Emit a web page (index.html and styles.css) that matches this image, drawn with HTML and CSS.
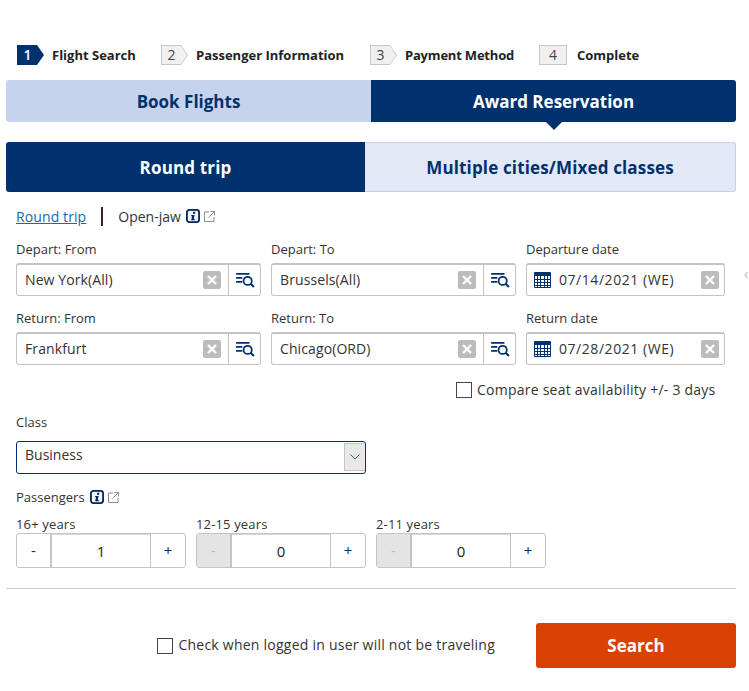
FILE: index.html
```html
<!DOCTYPE html>
<html lang="en">
<head>
    <meta charset="UTF-8">
    <meta name="viewport" content="width=device-width, initial-scale=1.0">
    <title>Award Reservation</title>
    <link rel="stylesheet" href="styles.css">
</head>
<body>
    <svg class="icon-defs" width="0" height="0">
        <symbol id="icon-list" viewBox="0 0 22 18">
            <path d="M1 2h15M1 6.5h7M1 11h7" fill="none" stroke="#00316f" stroke-width="2"/>
            <circle cx="14" cy="10" r="4.6" fill="none" stroke="#00316f" stroke-width="2"/>
            <path d="M17.3 13.3l3.7 3.7" fill="none" stroke="#00316f" stroke-width="2.4"/>
        </symbol>
        <symbol id="icon-clear" viewBox="0 0 18 18">
            <rect width="18" height="18" rx="2" fill="#bcbcbc"/>
            <path d="M5 5l8 8M13 5l-8 8" stroke="#fff" stroke-width="2.4"/>
        </symbol>
        <symbol id="icon-cal" viewBox="0 0 17 16">
            <path d="M.5.5h16v15H.5z" fill="none" stroke="#00316f"/>
            <path d="M0 1h17v3H0z" fill="#00316f"/>
            <path d="M0 7.5h17M0 10.5h17M0 13.5h17M3.5 1v14M6.5 1v14M10.5 1v14M13.5 1v14" stroke="#00316f"/>
        </symbol>
        <symbol id="icon-info" viewBox="0 0 14 14">
            <rect x=".9" y=".9" width="12.2" height="12.2" rx="2.5" fill="#f2f4f9" stroke="#00255a" stroke-width="1.8"/>
            <path d="M7 2.8h2.2v1.9H7zM5.2 6h3.4l-.9 4h1.1v1.3H5.2l.9-4H5.2z" fill="#00255a"/>
        </symbol>
        <symbol id="icon-ext" viewBox="0 0 11 11">
            <path d="M5 1H.5v9.5H10V6M6.5.5h4v4M10.5.5L4.5 6.5" fill="none" stroke="#8c8c8c"/>
        </symbol>
    </svg>

    <div class="page">
        <ol class="steps">
            <li class="step step-first">
                <span class="step-num step-num-on">1</span>
                <span class="step-text">Flight Search</span>
            </li>
            <li class="step step-second">
                <span class="step-num">2</span>
                <span class="step-text">Passenger Information</span>
            </li>
            <li class="step step-third">
                <span class="step-num">3</span>
                <span class="step-text">Payment Method</span>
            </li>
            <li class="step step-last">
                <span class="step-num step-num-end">4</span>
                <span class="step-text">Complete</span>
            </li>
        </ol>

        <div class="main-tabs">
            <a class="main-tab">Book Flights</a>
            <a class="main-tab main-tab-on">Award Reservation</a>
        </div>

        <div class="trip-tabs">
            <a class="trip-tab trip-tab-on">Round trip</a>
            <a class="trip-tab">Multiple cities/Mixed classes</a>
        </div>

        <div class="trip-links">
            <a class="trip-link">Round trip</a>
            <span class="trip-sep"></span>
            <span class="trip-open">Open-jaw</span>
            <svg class="info"><use href="#icon-info"/></svg>
            <svg class="ext"><use href="#icon-ext"/></svg>
        </div>

        <div class="fields">
            <div class="field">
                <label>Depart: From</label>
                <div class="box">
                    <span class="box-value">New York(All)</span>
                    <svg class="clear"><use href="#icon-clear"/></svg>
                    <span class="box-search"><svg class="list"><use href="#icon-list"/></svg></span>
                </div>
            </div>
            <div class="field">
                <label>Depart: To</label>
                <div class="box">
                    <span class="box-value">Brussels(All)</span>
                    <svg class="clear"><use href="#icon-clear"/></svg>
                    <span class="box-search"><svg class="list"><use href="#icon-list"/></svg></span>
                </div>
            </div>
            <div class="field">
                <label>Departure date</label>
                <div class="box">
                    <svg class="cal"><use href="#icon-cal"/></svg>
                    <span class="box-value box-date">07/14/2021 (WE)</span>
                    <svg class="clear clear-date"><use href="#icon-clear"/></svg>
                </div>
            </div>
            <div class="field">
                <label>Return: From</label>
                <div class="box">
                    <span class="box-value">Frankfurt</span>
                    <svg class="clear"><use href="#icon-clear"/></svg>
                    <span class="box-search"><svg class="list"><use href="#icon-list"/></svg></span>
                </div>
            </div>
            <div class="field">
                <label>Return: To</label>
                <div class="box">
                    <span class="box-value">Chicago(ORD)</span>
                    <svg class="clear"><use href="#icon-clear"/></svg>
                    <span class="box-search"><svg class="list"><use href="#icon-list"/></svg></span>
                </div>
            </div>
            <div class="field">
                <label>Return date</label>
                <div class="box">
                    <svg class="cal"><use href="#icon-cal"/></svg>
                    <span class="box-value box-date">07/28/2021 (WE)</span>
                    <svg class="clear clear-date"><use href="#icon-clear"/></svg>
                </div>
            </div>
        </div>

        <div class="compare">
            <span class="check"></span>
            <span class="check-text">Compare seat availability +/- 3 days</span>
        </div>

        <div class="class-row">
            <label>Class</label>
            <div class="select">
                <span class="select-value">Business</span>
                <span class="select-arrow">
                    <svg width="10" height="6" viewBox="0 0 10 6"><path d="M.5.5L5 5 9.5.5" fill="none" stroke="#555"/></svg>
                </span>
            </div>
        </div>

        <div class="pass-title">
            <span>Passengers</span>
            <svg class="info"><use href="#icon-info"/></svg>
            <svg class="ext"><use href="#icon-ext"/></svg>
        </div>

        <div class="pass-row">
            <div class="pass">
                <label>16+ years</label>
                <div class="stepper">
                    <span class="stepper-btn">-</span>
                    <span class="stepper-num">1</span>
                    <span class="stepper-btn stepper-plus">+</span>
                </div>
            </div>
            <div class="pass">
                <label>12-15 years</label>
                <div class="stepper">
                    <span class="stepper-btn stepper-off">-</span>
                    <span class="stepper-num">0</span>
                    <span class="stepper-btn stepper-plus">+</span>
                </div>
            </div>
            <div class="pass">
                <label>2-11 years</label>
                <div class="stepper">
                    <span class="stepper-btn stepper-off">-</span>
                    <span class="stepper-num">0</span>
                    <span class="stepper-btn stepper-plus">+</span>
                </div>
            </div>
        </div>

        <div class="footer">
            <div class="not-travel">
                <span class="check"></span>
                <span class="check-text">Check when logged in user will not be traveling</span>
            </div>
            <button class="search-btn" type="button">Search</button>
        </div>
    </div>

    <span class="side-arrow">‹</span>
</body>
</html>
```

FILE: styles.css
```css
body {
    font-family: "Open Sans", "Noto Sans", sans-serif;
    font-size: 13px;
    color: #333;
    background-color: #fff;
    margin: 0;
    overflow: hidden;
}
.icon-defs {
    position: absolute;
}
.page {
    width: 730px;
    padding: 45px 0 0 6px;
}
label {
    display: block;
}

/* steps */
.steps {
    display: flex;
    list-style: none;
    margin: 0;
    padding: 0 0 0 11px;
    height: 20px;
}
.step {
    display: flex;
    align-items: center;
    gap: 8px;
}
.step-first { width: 144px; }
.step-second { width: 209px; }
.step-third { width: 169px; }
.step-last { gap: 10px; }
.step-text {
    font-weight: 700;
    color: #222;
    white-space: nowrap;
}
.step-third .step-text {
    letter-spacing: -0.2px;
}
.step-num {
    position: relative;
    width: 27px;
    height: 20px;
    box-sizing: border-box;
    padding-right: 6px;
    font-size: 14px;
    line-height: 20px;
    text-align: center;
    color: #444;
    background-color: #c6c6c6;
    clip-path: polygon(0 0, 20px 0, 27px 50%, 20px 100%, 0 100%);
}
.step-num::before {
    content: "";
    position: absolute;
    z-index: -1;
    inset: 1px 1px 1px 1px;
    background-color: #f0f0f0;
    clip-path: polygon(0 0, 19px 0, 25px 50%, 19px 100%, 0 100%);
}
.step-num-on {
    color: #fff;
    font-weight: 600;
    background-color: #00316f;
}
.step-num-on::before {
    display: none;
}
.step-num-end {
    width: 28px;
    padding: 0;
    clip-path: none;
    background-color: #f0f0f0;
    border: 1px solid #c6c6c6;
    line-height: 18px;
}
.step-num-end::before {
    display: none;
}

/* tabs */
.main-tabs {
    display: flex;
    margin-top: 15px;
}
.main-tab {
    flex: 1;
    height: 42px;
    line-height: 44px;
    text-align: center;
    font-size: 17px;
    font-weight: 700;
    color: #00316f;
    background-color: #c5d4ec;
    border-radius: 3px 0 0 3px;
    position: relative;
}
.main-tab-on {
    color: #fff;
    background-color: #00316f;
    border-radius: 0 3px 3px 0;
}
.main-tab-on::after {
    content: "";
    position: absolute;
    left: 175px;
    top: 42px;
    border-top: 8px solid #00316f;
    border-left: 8px solid transparent;
    border-right: 8px solid transparent;
}
.trip-tabs {
    display: flex;
    margin-top: 20px;
}
.trip-tab {
    width: 371px;
    height: 50px;
    box-sizing: border-box;
    line-height: 50px;
    text-align: center;
    font-size: 17px;
    font-weight: 700;
    color: #00316f;
    background-color: #e3e8f6;
    border: 1px solid #c8d0e4;
    border-left: 0;
    border-radius: 0 3px 3px 0;
    letter-spacing: 0.15px;
}
.trip-tab-on {
    width: 359px;
    line-height: 52px;
    color: #fff;
    background-color: #00316f;
    border: 0;
    border-radius: 3px 0 0 3px;
}

.trip-links {
    display: flex;
    align-items: center;
    height: 20px;
    margin: 14px 0 0 10px;
    font-size: 14px;
}
.trip-link {
    color: #0b6cb8;
    text-decoration: underline;
    letter-spacing: 0.1px;
}
.trip-sep {
    width: 2px;
    height: 19px;
    margin: 0 15px;
    background-color: #3c1a28;
}
.trip-open {
    color: #333;
}
.info {
    width: 14px;
    height: 14px;
    margin-left: 5px;
}
.ext {
    width: 11px;
    height: 11px;
    margin-left: 4px;
}

/* search fields */
.fields {
    display: grid;
    grid-template-columns: 245px 245px 199px;
    column-gap: 10px;
    row-gap: 12px;
    margin: 13px 0 0 10px;
}
.field label {
    height: 20px;
    line-height: 20px;
    margin-bottom: 4px;
}
.box {
    display: flex;
    align-items: center;
    height: 33px;
    box-sizing: border-box;
    border: 1px solid #c4c4c4;
    border-top: 2px solid #c4c4c4;
    border-radius: 3px;
    font-size: 14px;
}
.box-value {
    flex: 1;
    padding: 0 0 2px 8px;
    color: #333;
    letter-spacing: 0.1px;
}
.box-date {
    letter-spacing: 0.55px;
}
.clear {
    width: 18px;
    height: 18px;
    margin-right: 7px;
}
.clear-date {
    margin-right: 5px;
}
.box-search {
    display: flex;
    align-items: center;
    justify-content: center;
    width: 31px;
    height: 100%;
    border-left: 1px solid #c4c4c4;
}
.list {
    width: 20px;
    height: 16px;
}
.cal {
    width: 17px;
    height: 16px;
    margin-left: 7px;
}

.compare {
    display: flex;
    align-items: center;
    gap: 5px;
    height: 16px;
    margin: 17px 0 0 450px;
    font-size: 14px;
    letter-spacing: 0.24px;
    white-space: nowrap;
}
.check {
    flex: none;
    width: 16px;
    height: 16px;
    box-sizing: border-box;
    border: 1px solid #444;
    background-color: #fff;
}
.check-text {
    padding-bottom: 2px;
}

/* class */
.class-row {
    margin: 14px 0 0 10px;
    width: 350px;
}
.class-row label {
    height: 20px;
    line-height: 20px;
}
.select {
    display: flex;
    align-items: flex-start;
    height: 33px;
    box-sizing: border-box;
    margin-top: 9px;
    border: 1px solid #00316f;
    border-radius: 3px;
    font-size: 14px;
}
.select-value {
    flex: 1;
    padding: 3px 0 0 8px;
}
.select-arrow {
    display: flex;
    align-items: center;
    justify-content: center;
    width: 20px;
    height: 26px;
    margin-top: 1px;
    background-color: #e8e8e8;
    border: 1px solid #c4c4c4;
    border-right: 0;
}

/* passengers */
.pass-title {
    display: flex;
    align-items: center;
    height: 20px;
    margin: 13px 0 0 10px;
}
.pass-row {
    display: flex;
    gap: 10px;
    margin: 7px 0 0 10px;
}
.pass {
    width: 170px;
}
.pass label {
    height: 20px;
    line-height: 20px;
    margin-bottom: -1px;
    letter-spacing: 0.15px;
}
.stepper {
    display: flex;
    height: 35px;
    box-sizing: border-box;
    border: 1px solid #c4c4c4;
    border-radius: 3px;
    overflow: hidden;
    line-height: 32px;
    text-align: center;
}
.stepper-btn {
    width: 33px;
    color: #00316f;
    font-size: 15px;
    border-right: 2px solid #c4c4c4;
}
.stepper-plus {
    width: 34px;
    border-right: 0;
    border-left: 1px solid #c4c4c4;
}
.stepper-off {
    color: #bbb;
    background-color: #e4e4e4;
}
.stepper-num {
    flex: 1;
    color: #222;
    font-size: 15px;
    border-top: 1px solid #d8d8d8;
}

/* footer */
.footer {
    display: flex;
    align-items: center;
    justify-content: flex-end;
    height: 45px;
    margin-top: 20px;
    padding-top: 34px;
    border-top: 1px solid #ccc;
}
.not-travel {
    display: flex;
    align-items: center;
    gap: 5px;
    margin-right: 41px;
    font-size: 14px;
    letter-spacing: 0.24px;
}
.search-btn {
    width: 200px;
    height: 45px;
    padding: 0;
    border: none;
    border-radius: 3px;
    background-color: #d94200;
    color: #fff;
    font-family: inherit;
    font-size: 17px;
    font-weight: 700;
}

.side-arrow {
    position: absolute;
    left: 744px;
    top: 264px;
    color: #bbb;
    font-size: 14px;
}
```
